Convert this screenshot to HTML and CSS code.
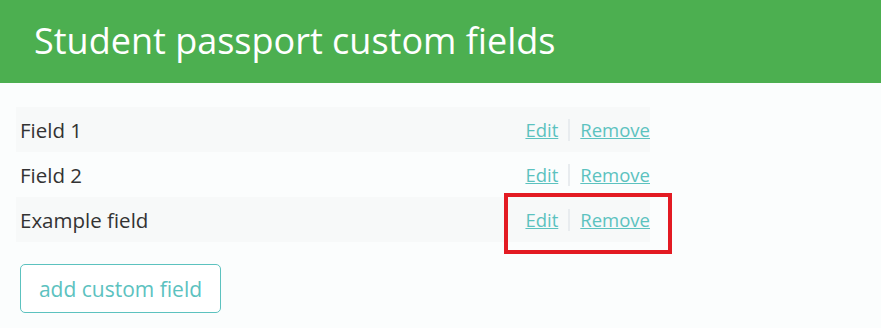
FILE: index.html
```html
<!DOCTYPE html>
<html lang="en">
<head>
    <meta charset="UTF-8">
    <title>Student passport custom fields</title>
    <link rel="stylesheet" href="styles.css">
</head>
<body>
    <div class="header">
        <h1 class="title">Student passport custom fields</h1>
    </div>
    <div class="content">
        <div class="field-list">
            <div class="field-row">
                <span class="field-name">Field 1</span>
                <span class="actions"><a href="#">Edit</a><span class="sep"></span><a href="#">Remove</a></span>
            </div>
            <div class="field-row">
                <span class="field-name">Field 2</span>
                <span class="actions"><a href="#">Edit</a><span class="sep"></span><a href="#">Remove</a></span>
            </div>
            <div class="field-row">
                <span class="field-name">Example field</span>
                <span class="actions highlighted"><a href="#">Edit</a><span class="sep"></span><a href="#">Remove</a></span>
            </div>
        </div>
        <button class="add-button">add custom field</button>
    </div>
</body>
</html>
```

FILE: styles.css
```css
body {
    font-family: 'Open Sans', sans-serif;
    margin: 0;
    padding: 0;
    background-color: #fbfdfd;
    color: #333;
}
.header {
    background-color: #4caf50;
    height: 83px;
    display: flex;
    align-items: center;
    padding-left: 34px;
}
.title {
    margin: 0 0 2px;
    font-size: 36px;
    font-weight: normal;
    color: #fff;
}
.content {
    padding: 24px 16px;
}
.field-list {
    width: 634px;
}
.field-row {
    height: 45px;
    display: flex;
    align-items: center;
    justify-content: space-between;
    padding-left: 4px;
}
.field-row:nth-child(odd) {
    background-color: #f7f9f9;
}
.field-name {
    font-size: 20.5px;
}
.actions {
    align-self: stretch;
    display: flex;
    align-items: center;
    font-size: 18.5px;
    position: relative;
}
.actions a {
    color: #5cc2bf;
}
.sep {
    width: 2px;
    height: 22px;
    background-color: #e8ecef;
    margin: 0 10px;
}
.highlighted::after {
    content: '';
    position: absolute;
    left: -21px;
    right: -22px;
    top: -4px;
    bottom: -12px;
    border: 4px solid #e31b23;
}
.add-button {
    margin-top: 22px;
    margin-left: 4px;
    width: 201px;
    height: 49px;
    background-color: #fff;
    border: 1px solid #5cc2bf;
    border-radius: 5px;
    color: #5cc2bf;
    font-family: 'Open Sans', sans-serif;
    font-size: 21px;
}
```
